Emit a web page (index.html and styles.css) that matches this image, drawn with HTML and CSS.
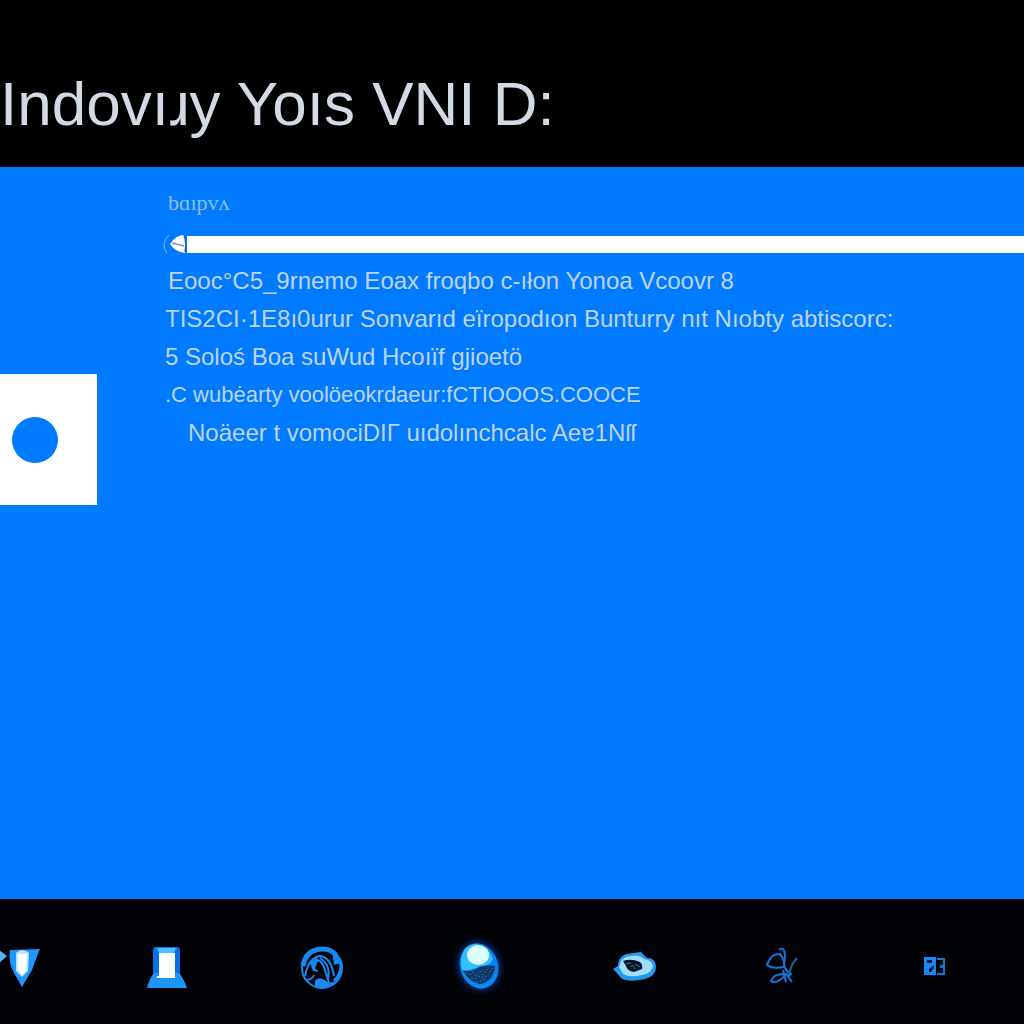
FILE: index.html
```html
<!DOCTYPE html>
<html lang="en">
<head>
  <meta charset="UTF-8">
  <meta name="viewport" content="width=device-width, initial-scale=1">
  <title>Indovıry Yoıs VNI D:</title>
  <link rel="stylesheet" href="styles.css">
</head>
<body>
  <header class="header">
    <h1 class="title">Indovıɹy Yoıs VNI D:</h1>
  </header>

  <main class="main">
    <aside class="side">
      <div class="tile"><span class="dot"></span></div>
    </aside>

    <section class="content">
      <label class="label" for="level">bɑıpvʌ</label>
      <div class="slider">
        <svg class="knob" viewBox="0 0 24 20" aria-hidden="true">
          <path d="M6 1Q-3 10 4 19" fill="none" stroke="#7db8ff" stroke-width="1"/>
          <path d="M21 1Q13 1 7 10Q12 18 22 19Q24 9 21 1Z" fill="#fff"/>
          <path d="M9 9l12 3" stroke="#7a8fc0" stroke-width="1.5"/>
          <path d="M21 1q3 8 1 17" fill="none" stroke="#0868dc" stroke-width="1.5"/>
        </svg>
        <input class="range" id="level" type="range" min="0" max="100" value="0">
      </div>
      <p class="line line-first">Eooc°C5_9rnemo Eoax froqbo c-ıłon Yonoa Vcoovr 8</p>
      <p class="line">TIS2CI·1E8ı0urur Sonvarıd eïropodıon Bunturry nıt Nıobty abtiscorc:</p>
      <p class="line">5 Soloś Boa suWud Hcoıïf gjioetö</p>
      <p class="line line-small">.C wubėarty voolöeokrdaeur:fCTIOOOS.COOCE</p>
      <p class="line line-last">Noäeer t vomociDIГ uıdolınchcalc Aeɐ1Nſſ</p>
    </section>
  </main>

  <footer class="taskbar">
    <button class="task" type="button" aria-label="Shield">
      <svg viewBox="0 0 48 48">
        <path d="M11 8l8 6-8 7z" fill="#58b4f5"/>
        <path d="M22 8L52 7Q49 14 44 28L34 45L26 31Q20 20 22 8z" fill="#1e96ff"/>
        <path d="M28 11Q34 5 41 11L40 29L34 35L28 29z" fill="#bfe5ff"/>
        <path d="M30 12h9l-1 17-4 4-4-5z" fill="#fff"/>
      </svg>
    </button>
    <button class="task" type="button" aria-label="Drive">
      <svg viewBox="0 0 48 48">
        <path d="M11 8q0-3 3-3h21q3 0 3 3v25H11z" fill="#0870e8"/>
        <path d="M15 6h19l-2 5H17z" fill="#4fc0ff"/>
        <path d="M12 31h25q4 4 8 15H5q2-9 7-15z" fill="#1e96f5"/>
        <path d="M17 11h16v25H15v-2h2z" fill="#fff"/>
      </svg>
    </button>
    <button class="task" type="button" aria-label="Browser">
      <svg viewBox="0 0 48 48">
        <g fill="none" stroke="#1689f5">
          <circle cx="26" cy="26" r="20" stroke-width="2"/>
          <path d="M7 24Q10 7 27 7Q35 7 40 13" stroke-width="5"/>
          <path d="M9 34Q13 15 24 14Q35 15 38 34M17 21q6-7 11 4l5 16M24 16q11 7 8 21M10 38q6 0 8-5" stroke-width="2"/>
          <path d="M45 20q1 12-7 19" stroke-width="3"/>
        </g>
        <path d="M36 9q8 5 9 12l-7 2zM19 39q2-4 8-2l6 4 7-2q-10 11-21 6zM14 21l7-6 1 4-3 7 4 4-6-1z" fill="#1689f5"/>
      </svg>
    </button>
    <button class="task task-glow" type="button" aria-label="Start">
      <svg viewBox="0 0 48 48">
        <ellipse cx="30" cy="24" rx="19" ry="23" fill="#0a7eec" transform="rotate(-18 30 24)"/>
        <path d="M14 29q8 1 13-2 8-5 19-3-1 15-15 18-11-2-17-13z" fill="#0b3768"/>
        <path d="M17 31l4 2 3-3 3 4 4-5 3 4 4-6 3 3 3-4M22 36l4 1 5-3 4 2 5-4M27 40l5-1 5-2" fill="none" stroke="#3d78aa" stroke-dasharray="2 2"/>
        <path d="M12 22Q12 2 28 2Q40 4 44 17Q42 24 31 24Q22 29 13 28z" fill="#35bfff"/>
        <ellipse cx="29" cy="13" rx="11" ry="10" fill="#d9ffff"/>
        <path d="M14 31q5 9 16 14 13-1 17-13" fill="none" stroke="#168bed" stroke-width="2"/>
      </svg>
    </button>
    <button class="task" type="button" aria-label="Viewer">
      <svg viewBox="0 0 48 48">
        <path d="M10 27l5-3q0-9 8-12l15-2 6 6q9 0 9 9 0 9-11 12-17 4-24-1-4-5-8-9z" fill="#2499ed"/>
        <path d="M16 25q2-11 12-11 8-2 13 3 8 1 9 7-1 7-11 9-13 3-19-1z" fill="#a0ddff"/>
        <path d="M20 19q8-3 17 1 3 3 2 7l-8 3q-7-1-8-6z" fill="#061523"/>
        <path d="M23 22l5-1m4 1l5 3m-10 0l3-2 2 4" fill="none" stroke="#287aaf"/>
      </svg>
    </button>
    <button class="task" type="button" aria-label="Tools">
      <svg viewBox="0 0 48 48">
        <g fill="none" stroke="#1674dc" stroke-width="2">
          <path d="M10 23Q14 11 23 12Q28 18 27 25Q15 27 10 23z"/>
          <path d="M22 8q5-4 6 5l-1 9q1 7 7 10l-3 3M14 39q3-8 15-7-6 8-13 8zM26 28l3 12M29 32l6 8"/>
          <path d="M40 16q-6 6-8 17" stroke="#235c94"/>
        </g>
      </svg>
    </button>
    <button class="task" type="button" aria-label="Panels">
      <svg viewBox="0 0 48 48">
        <path d="M13 15h12v18H13z" fill="#1588f5"/>
        <path d="M16 18h5v3h-5zM18 27l5-4v3l-3 4h-2z" fill="#031a38"/>
        <path d="M26 17h7v6l-4 2h4v7h-7" fill="none" stroke="#1474d8" stroke-width="2"/>
      </svg>
    </button>
  </footer>
</body>
</html>
```
FILE: styles.css
```css
* {
  box-sizing: border-box;
}

body {
  margin: 0;
  min-height: 100vh;
  display: grid;
  grid-template-rows: 167px 1fr 125px;
  background: #000;
  font-family: "Liberation Sans", Arial, sans-serif;
  overflow-x: hidden;
}

.header {
  padding-top: 66px;
}

.title {
  margin: 0;
  font-size: 62px;
  line-height: 76px;
  font-weight: 400;
  color: #d3dae5;
  white-space: nowrap;
}

.main {
  display: flex;
  background: #007bff;
}

.side {
  width: 163px;
  flex-shrink: 0;
  padding-top: 207px;
}

.tile {
  width: 97px;
  height: 131px;
  padding-left: 12px;
  display: flex;
  align-items: center;
  background: #fff;
}

.dot {
  width: 46px;
  height: 46px;
  border-radius: 50%;
  background: #007bff;
}

.content {
  flex: 1;
  min-width: 0;
  padding-top: 24px;
  color: #bfd2ef;
}

.label {
  display: block;
  padding-left: 5px;
  font-family: "Liberation Serif", serif;
  font-size: 22px;
  line-height: 24px;
  color: #8fbcf2;
}

.slider {
  display: flex;
  align-items: center;
  height: 20px;
  margin: 19px 0 8px;
}

.knob {
  width: 24px;
  height: 20px;
  flex-shrink: 0;
}

.range {
  appearance: none;
  flex: 1;
  min-width: 0;
  height: 17px;
  margin: 0;
  background: #fff;
}

.range::-webkit-slider-thumb {
  appearance: none;
  width: 1px;
  height: 17px;
  background: #fff;
}

.line {
  margin: 0;
  padding-left: 2px;
  font-size: 24px;
  line-height: 38px;
  white-space: nowrap;
}

.line-first {
  padding-left: 5px;
}

.line-small {
  font-size: 22px;
}

.line-last {
  padding-left: 25px;
}

.taskbar {
  display: flex;
  justify-content: space-between;
  align-items: center;
  margin-left: -12px;
  padding: 9px 65px 0 0;
  background: #010307;
}

.task {
  width: 48px;
  height: 48px;
  padding: 0;
  border: 0;
  background: none;
  cursor: pointer;
}

.task svg {
  display: block;
  width: 48px;
  height: 48px;
  overflow: visible;
}

.task-glow {
  filter: drop-shadow(0 0 4px #0050c8);
}
```
